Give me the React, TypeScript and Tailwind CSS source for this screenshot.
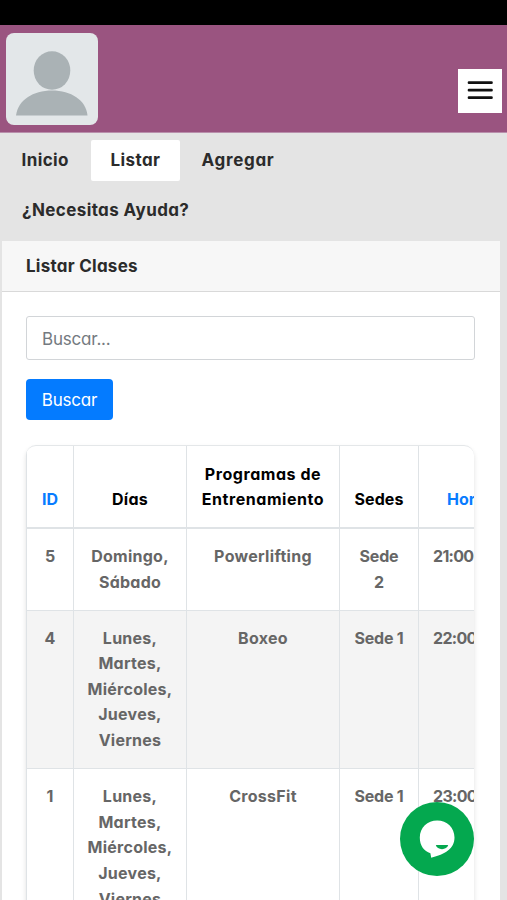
import React from "react";

interface ClassRow {
  id: number;
  days: string[];
  program: string;
  place: string[];
  time: string;
}

const rows: ClassRow[] = [
  {
    id: 5,
    days: ["Domingo,", "Sábado"],
    program: "Powerlifting",
    place: ["Sede", "2"],
    time: "21:00",
  },
  {
    id: 4,
    days: ["Lunes,", "Martes,", "Miércoles,", "Jueves,", "Viernes"],
    program: "Boxeo",
    place: ["Sede 1"],
    time: "22:00",
  },
  {
    id: 1,
    days: ["Lunes,", "Martes,", "Miércoles,", "Jueves,", "Viernes"],
    program: "CrossFit",
    place: ["Sede 1"],
    time: "23:00",
  },
];

const Avatar = () => (
  <svg
    className="mt-[8px] ml-[6px] h-[92px] w-[92px] rounded-[8px] bg-[#e3e7e9]"
    viewBox="0 0 92 92"
    fill="#aab2b5"
  >
    <ellipse cx="46" cy="37.5" rx="18.3" ry="19.3" />
    <path d="M10 82.500C12 67 27 57.500 46 57.500s34 9.500 35.500 25z" />
  </svg>
);

const Lines = ({ items }: { items: string[] }) => (
  <>
    {items.map((item) => (
      <span key={item} className="block whitespace-nowrap">
        {item}
      </span>
    ))}
  </>
);

const th = "border-l border-b-2 border-[#dfe3e6] pb-[14px] align-bottom font-bold";
const td = "border-l border-b border-[#dfe3e6] pt-[15px] pb-[14.500px] align-top font-bold";

const ChatButton = () => (
  <button className="absolute top-[802px] left-[400px] h-[74px] w-[74px] rounded-full bg-[#04a84f]">
    <svg viewBox="0 0 74 74" className="h-full w-full">
      <path
        fill="#fff"
        d="M37.200 18.500c9.800 0 17.300 7.300 17.300 17 0 11.500-9.500 16.500-23.300 20.300l-.8-4.600C24 49 19.800 43.800 19.800 35.500c0-9.700 7.600-17 17.400-17z"
      />
      <path fill="#04a84f" d="M35.800 43h12.400c-1 5.500-11.400 5.500-12.400 0z" />
    </svg>
  </button>
);

const App: React.FC = () => (
  <div className="relative h-[900px] w-[507px] overflow-hidden bg-[#e4e4e4] font-['Inter','Noto_Sans',sans-serif] text-[#2b2b2b] [font-feature-settings:'cv11']">
    {/* Status bar */}
    <div className="h-[25px] bg-black" />

    {/* Header */}
    <header className="flex h-[108px] justify-between border-b border-[#b98fac] bg-[#9a5480]">
      <Avatar />
      <button className="mt-[44px] mr-[5px] h-[44px] w-[44px] bg-white">
        <svg
          viewBox="0 0 44 44"
          className="h-full w-full"
          stroke="#111"
          strokeWidth="2.700"
          strokeLinecap="round"
        >
          <path d="M11 13.700h22.500M11 21.200h22.500M11 28.700h22.500" />
        </svg>
      </button>
    </header>

    {/* Tabs */}
    <nav className="h-[108px] pt-[7px] text-[17px] font-bold tracking-[0.4px]">
      <div className="flex h-[41px] items-center">
        <a className="w-[91px] pl-[21.500px]">Inicio</a>
        <a className="flex h-full w-[89px] items-center justify-center rounded-[2px] bg-white">
          Listar
        </a>
        <a className="pl-[21.500px] tracking-[0.7px]">Agregar</a>
      </div>
      <div className="mt-[9px] flex h-[41px] items-center pl-[22px]">
        <a>¿Necesitas Ayuda?</a>
      </div>
    </nav>

    {/* Card */}
    <main className="ml-[2px] h-[659px] w-[498px] rounded-t-[2px] bg-white">
      <h1 className="flex h-[51px] items-center border-b border-[#d9d9d9] bg-[#f7f7f7] pt-[1px] pl-[24px] text-[17px] font-bold tracking-[0.25px]">
        Listar Clases
      </h1>

      <div className="px-[24px] pt-[24px]">
        <input
          placeholder="Buscar..."
          className="block h-[44px] w-[449px] rounded-[3px] border border-[#d2d5d8] px-[15px] pt-[1px] text-[17px] tracking-[-0.2px] placeholder:text-[#747a80]"
        />
        <button className="mt-[19px] h-[41px] w-[87px] rounded-[4px] bg-[#047bff] pt-[2px] text-[17px] tracking-[-0.2px] text-white">
          Buscar
        </button>

        <div className="mt-[25px] h-[460px] w-[448px] overflow-hidden rounded-t-[10px] border-t border-[#e4e7e9] shadow-[0_3px_5px_rgba(0,0,0,0.12)]">
          <table className="w-[520px] table-fixed border-separate border-spacing-0 text-center text-[16px] leading-[25.600px] text-[#666]">
            <colgroup>
              <col className="w-[47px]" />
              <col className="w-[113px]" />
              <col className="w-[153px]" />
              <col className="w-[79px]" />
              <col className="w-[128px]" />
            </colgroup>
            <thead>
              <tr className="h-[83px] text-black">
                <th className={`${th} text-[#087cff]`}>ID</th>
                <th className={`${th} tracking-[0.3px]`}>Días</th>
                <th className={`${th} tracking-[0.55px]`}>
                  <Lines items={["Programas de", "Entrenamiento"]} />
                </th>
                <th className={`${th} tracking-[0.1px]`}>Sedes</th>
                <th className={`${th} pl-[28px] text-left text-[#087cff]`}>
                  Horario
                </th>
              </tr>
            </thead>
            <tbody>
              {rows.map((row) => (
                <tr key={row.id} className="even:bg-[#f4f4f4]">
                  <td className={td}>{row.id}</td>
                  <td className={`${td} tracking-[0.25px]`}>
                    <Lines items={row.days} />
                  </td>
                  <td className={`${td} tracking-[0.3px]`}>{row.program}</td>
                  <td className={`${td} tracking-[-0.2px]`}>
                    <Lines items={row.place} />
                  </td>
                  <td
                    className={`${td} pl-[14px] text-left tracking-[-0.7px]`}
                  >
                    {row.time}
                  </td>
                </tr>
              ))}
            </tbody>
          </table>
        </div>
      </div>
    </main>

    <ChatButton />
  </div>
);

export default App;
